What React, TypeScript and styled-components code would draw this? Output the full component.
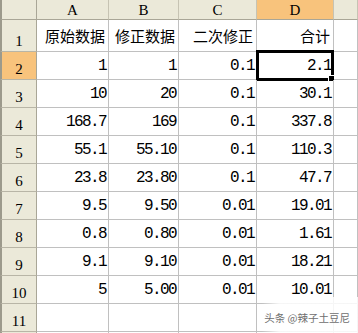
import { Fragment } from "react";
import styled, { createGlobalStyle } from "styled-components";

const GlobalStyle = createGlobalStyle`
  html, body {
    margin: 0;
    padding: 0;
    background: #fff;
  }
`;

const Sheet = styled.div`
  position: relative;
  width: 358px;
  height: 333px;
  overflow: hidden;
  background: #fff;
  display: grid;
  grid-template-columns: 37px 72px 70px 78px 77px 1fr;
  grid-template-rows: 20px 32px repeat(11, 28px);
  font-family: "Liberation Serif", "Noto Sans CJK SC", serif;
`;

const ColHeader = styled.div<{ $active?: boolean }>`
  box-sizing: border-box;
  display: flex;
  align-items: center;
  justify-content: center;
  background: ${({ $active }) => ($active ? "#f8c37c" : "#ebe9d9")};
  border-right: 1px solid #c6c3b3;
  border-bottom: 1px solid #a9a697;
  font-size: 15px;
  color: #000;
  padding-top: 1px;
`;

const Corner = styled.div`
  box-sizing: border-box;
  background: #ebe9d9;
  border-left: 2px solid #9c9a8c;
  border-right: 1px solid #a9a697;
  border-bottom: 1px solid #a9a697;
`;

const RowHeader = styled.div<{ $active?: boolean }>`
  box-sizing: border-box;
  display: flex;
  align-items: flex-end;
  justify-content: center;
  padding-bottom: 1px;
  background: ${({ $active }) => ($active ? "#f8c37c" : "#ebe9d9")};
  border-left: 2px solid #9c9a8c;
  border-right: 1px solid #a9a697;
  border-bottom: 1px solid #b8b5a6;
  font-size: 15px;
  color: #000;
`;

const Cell = styled.div<{ $cjk?: boolean }>`
  box-sizing: border-box;
  position: relative;
  display: flex;
  align-items: flex-end;
  justify-content: flex-end;
  padding: 0 ${({ $cjk }) => ($cjk ? "3px" : "2px")}
    ${({ $cjk }) => ($cjk ? "5px" : "4px")} 0;
  border-right: 1px solid #c0c0c0;
  border-bottom: 1px solid #c0c0c0;
  white-space: nowrap;
  color: #000;
  font-size: ${({ $cjk }) => ($cjk ? "15px" : "16px")};
  letter-spacing: ${({ $cjk }) => ($cjk ? "0" : "-1.6px")};
  font-family: ${({ $cjk }) =>
    $cjk
      ? `"Noto Sans CJK SC", sans-serif`
      : `"Liberation Mono", monospace`};
`;

const Selection = styled.div`
  position: absolute;
  top: -2px;
  left: -1px;
  right: -1px;
  bottom: -2px;
  border: 3px solid #000;
  pointer-events: none;
`;

const FillHandle = styled.div`
  position: absolute;
  right: -4px;
  bottom: -4px;
  width: 5px;
  height: 5px;
  background: #000;
  border: 1px solid #fff;
`;

const Watermark = styled.div`
  position: absolute;
  right: 0;
  bottom: 0;
  width: 96px;
  height: 36px;
  display: flex;
  align-items: center;
  justify-content: flex-end;
  padding-right: 8px;
  box-sizing: border-box;
  background: linear-gradient(
    to right,
    rgba(255, 255, 255, 0) 0%,
    rgba(255, 255, 255, 0.85) 18%,
    rgba(255, 255, 255, 0.85) 100%
  );
  font-family: "Noto Sans CJK SC", sans-serif;
  font-size: 10.5px;
  color: #6e6e6e;
  padding-top: 4px;
`;

const columns = ["A", "B", "C", "D", ""];

const rows: string[][] = [
  ["原始数据", "修正数据", "二次修正", "合计"],
  ["1", "1", "0.1", "2.1"],
  ["10", "20", "0.1", "30.1"],
  ["168.7", "169", "0.1", "337.8"],
  ["55.1", "55.10", "0.1", "110.3"],
  ["23.8", "23.80", "0.1", "47.7"],
  ["9.5", "9.50", "0.01", "19.01"],
  ["0.8", "0.80", "0.01", "1.61"],
  ["9.1", "9.10", "0.01", "18.21"],
  ["5", "5.00", "0.01", "10.01"],
  ["", "", "", ""],
];

export default function App() {
  return (
    <>
      <GlobalStyle />
      <Sheet>
        <Corner />
        {columns.map((c, i) => (
          <ColHeader key={i} $active={c === "D"}>
            {c}
          </ColHeader>
        ))}
        {rows.map((row, r) => (
          <Fragment key={r}>
            <RowHeader $active={r === 1}>{r + 1}</RowHeader>
            {row.map((value, c) => (
              <Cell key={c} $cjk={r === 0}>
                {value}
                {r === 1 && c === 3 && (
                  <Selection>
                    <FillHandle />
                  </Selection>
                )}
              </Cell>
            ))}
            <Cell />
          </Fragment>
        ))}
        <RowHeader />
        <Cell />
        <Cell />
        <Cell />
        <Cell />
        <Cell />
        <Watermark>头条 @辣子土豆尼</Watermark>
      </Sheet>
    </>
  );
}
